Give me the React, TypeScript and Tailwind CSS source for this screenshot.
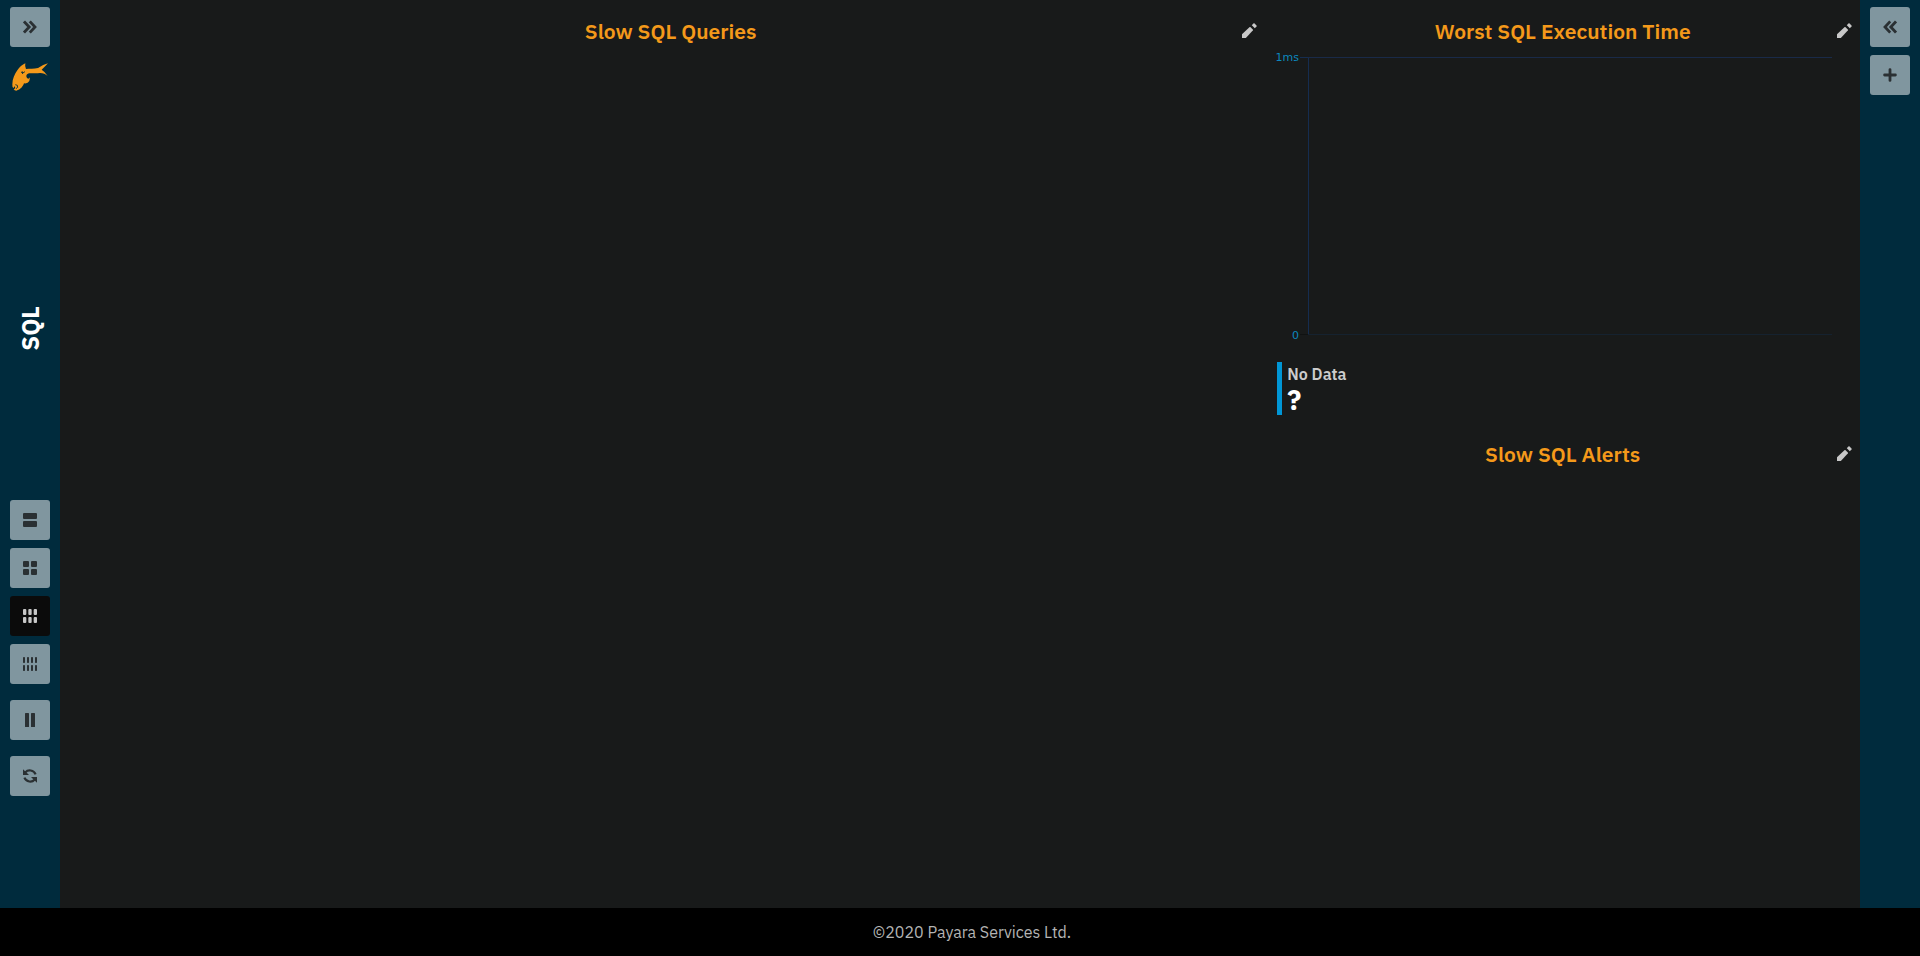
import type { ReactNode } from 'react';

function PencilIcon() {
  return (
    <svg viewBox="0 0 15 15" className="size-[15px]" fill="currentColor" aria-hidden="true">
      <path d="M0 15V11.2L7.4 4.2Q8 3.7 8.6 4.2L10.8 6.4Q11.3 7 10.8 7.6L3.8 15Z" />
      <path d="M9.8 2.3 11.4.5Q12 0 12.6.5L14.5 2.4Q15 3 14.5 3.6L12.8 5.2Z" />
    </svg>
  );
}

function FishLogo() {
  return (
    <svg viewBox="0 0 108 84" className="h-7 w-9" aria-hidden="true">
      <path
        fill="#f4991a"
        d="M40 1C31 5 22 12 16 22C8 33 1 48 1 64Q0 72 5 75L8 69L10 76L5 79Q7 83 13 83C26 80 33 70 36 61Q47 63 52 54L54 43Q50 50 46 46C41 40 43 32 52 31C64 30 75 31 84 30Q98 30 107 39Q99 26 89 20Q98 12 108 1Q94 4 78 15C66 18 53 17 42 18Q38 9 40 1Z"
      />
      <path fill="none" stroke="#002b3d" strokeWidth="2.5" d="M27 27l5 3 7-4M31 25l1 8M10 65l6 2 1 6-5 4" />
    </svg>
  );
}

function ChevronsIcon({ left = false }: { left?: boolean }) {
  return (
    <svg viewBox="0 0 14 14" className="size-[14px]" fill="none" stroke="currentColor" strokeWidth="2.8" aria-hidden="true">
      <path d={left ? 'M7.2 1.4 2 7l5.2 5.6M13 1.4 7.8 7l5.2 5.6' : 'M1 1.4 6.2 7 1 12.6M6.8 1.4 12 7l-5.2 5.6'} />
    </svg>
  );
}

function PlusIcon() {
  return (
    <svg viewBox="0 0 14 14" className="size-[14px]" stroke="currentColor" strokeWidth="2.8" strokeLinecap="round" aria-hidden="true">
      <path d="M7 1.6v10.8M1.6 7h10.8" />
    </svg>
  );
}

function ColumnsIcon({ columns }: { columns: number }) {
  const gap = 2;
  const width = (14 - gap * (columns - 1)) / columns;
  return (
    <svg viewBox="0 0 14 14" className="size-[14px]" fill="currentColor" aria-hidden="true">
      {Array.from({ length: columns }, (_, i) => (
        <g key={i}>
          <rect x={i * (width + gap)} y="0" width={width} height="6" rx={Math.min(1, width / 3)} />
          <rect x={i * (width + gap)} y="8" width={width} height="6" rx={Math.min(1, width / 3)} />
        </g>
      ))}
    </svg>
  );
}

function PauseIcon() {
  return (
    <svg viewBox="0 0 14 14" className="size-[14px]" fill="currentColor" aria-hidden="true">
      <rect x="2" y="0" width="4" height="14" rx=".6" />
      <rect x="8" y="0" width="4" height="14" rx=".6" />
    </svg>
  );
}

function RefreshIcon() {
  return (
    <svg viewBox="0 0 14 14" className="size-[14px]" aria-hidden="true">
      <path d="M2.5 3.2C5 .3 10.7.8 12.6 5.4M11.5 10.8C9 13.7 3.3 13.2 1.4 8.6" fill="none" stroke="currentColor" strokeWidth="2.2" />
      <path d="M0 .2V6H6L4 4ZM14 13.8V8H8l2 2Z" fill="currentColor" />
    </svg>
  );
}

function BarButton({ label, active = false, children }: { label: string; active?: boolean; children: ReactNode }) {
  return (
    <button
      type="button"
      aria-label={label}
      aria-pressed={active}
      className={
        active
          ? 'flex size-10 shrink-0 items-center justify-center rounded-[3px] bg-[#0b0b0b] text-[#c8c8c8]'
          : 'flex size-10 shrink-0 items-center justify-center rounded-[3px] bg-[#80969f] text-[#2a3033]'
      }
    >
      {children}
    </button>
  );
}

function WidgetHeader({ title }: { title: string }) {
  return (
    <header className="relative flex h-12 items-end justify-center">
      <h3 className="text-[21px] leading-[34px] font-semibold text-[#f4991a]">{title}</h3>
      <button type="button" aria-label={`Edit ${title}`} className="absolute right-2 bottom-2 pb-[2px] text-[#c8c8c8]">
        <PencilIcon />
      </button>
    </header>
  );
}

function ExecutionTimeChart() {
  return (
    <div className="pr-7">
      <svg className="block h-[300px] w-full font-['DejaVu_Sans',sans-serif] text-[11px]" fill="#0c87be" role="img" aria-label="Worst SQL execution time">
        <g strokeWidth="1" shapeRendering="crispEdges">
          <path d="M35 9.5H43M43.5 9V287" stroke="#152d50" />
          <line x1="43" x2="100%" y1="9.5" y2="9.5" stroke="#192a48" />
          <line x1="43" x2="100%" y1="286.5" y2="286.5" stroke="#15222f" />
          <line x1="35" x2="43" y1="286.5" y2="286.5" stroke="#101212" />
        </g>
        <text x="34" y="13" textAnchor="end">1ms</text>
        <text x="34" y="291" textAnchor="end">0</text>
      </svg>
    </div>
  );
}

export default function App() {
  return (
    <div className="flex min-h-screen flex-col bg-[#181a1a] font-['IBM_Plex_Sans','Noto_Sans',sans-serif]">
      <div className="flex flex-1">
        <nav className="flex w-[60px] shrink-0 flex-col items-center bg-[#002b3d] pt-[7px] pb-28">
          <BarButton label="Open page menu"><ChevronsIcon /></BarButton>
          <a href="#home" aria-label="Home" className="mt-4"><FishLogo /></a>
          <div className="flex flex-1 items-center justify-center pt-[66px]">
            <h2 className="rotate-180 text-[24px] leading-8 font-bold text-white [writing-mode:vertical-rl]">SQL</h2>
          </div>
          <div className="flex flex-col gap-4">
            <div className="flex flex-col gap-2">
              <BarButton label="One column"><ColumnsIcon columns={1} /></BarButton>
              <BarButton label="Two columns"><ColumnsIcon columns={2} /></BarButton>
              <BarButton label="Three columns" active><ColumnsIcon columns={3} /></BarButton>
              <BarButton label="Four columns"><ColumnsIcon columns={4} /></BarButton>
            </div>
            <BarButton label="Pause"><PauseIcon /></BarButton>
            <BarButton label="Refresh"><RefreshIcon /></BarButton>
          </div>
        </nav>

        <main className="grid min-w-0 flex-1 grid-cols-3 pl-4">
          <section className="col-span-2">
            <WidgetHeader title="Slow SQL Queries" />
          </section>
          <div className="flex flex-col gap-2">
            <section>
              <WidgetHeader title="Worst SQL Execution Time" />
              <ExecutionTimeChart />
              <div className="mt-[14px] ml-3 flex h-[53px] flex-col border-l-[5px] border-[#0096d6] pl-[5px]">
                <span className="text-[16px] leading-6 font-semibold text-[#cccccc]">No Data</span>
                <strong className="text-[28px] leading-7 font-bold text-white">?</strong>
              </div>
            </section>
            <section>
              <WidgetHeader title="Slow SQL Alerts" />
            </section>
          </div>
        </main>

        <aside className="flex w-[60px] shrink-0 flex-col items-center gap-2 bg-[#002b3d] pt-[7px]">
          <BarButton label="Open settings"><ChevronsIcon left /></BarButton>
          <BarButton label="Add widget"><PlusIcon /></BarButton>
        </aside>
      </div>
      <footer className="flex h-12 items-center justify-center bg-black pl-6 text-[16px] text-[#b4b4b4]">
        ©2020 Payara Services Ltd.
      </footer>
    </div>
  );
}
